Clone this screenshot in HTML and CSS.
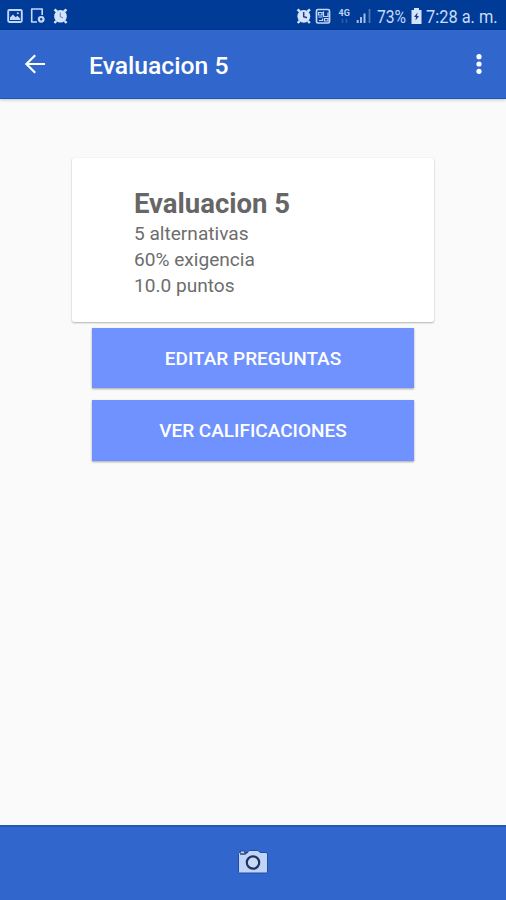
FILE: index.html
```html
<!DOCTYPE html>
<html lang="es">
<head>
<meta charset="utf-8">
<meta name="viewport" content="width=device-width, initial-scale=1">
<title>Evaluacion 5</title>
<link rel="stylesheet" href="styles.css">
</head>
<body>
<div class="screen">
  <header class="status">
    <svg class="status-left" width="70" height="30" viewBox="0 0 70 30" fill="none">
      <rect x="8.2" y="10" width="13.6" height="12" rx="1.2" stroke="#c3d8f8" stroke-width="1.900"/>
      <path d="M10 20v-2.500l3-3 2.600 2.700 1.800-1.500 2.800 2.800v1.500z" fill="#c3d8f8"/>
      <circle cx="17.800" cy="13.200" r="1" fill="#c3d8f8"/>
      <path d="M37 22h-5.300V9h10.500v6" stroke="#c3d8f8" stroke-width="1.600" stroke-linejoin="round"/>
      <circle cx="41.200" cy="19.300" r="2.300" stroke="#c3d8f8" stroke-width="2.200"/>
      <circle cx="60.500" cy="16.300" r="6.300" fill="#d5e4fb"/>
      <path d="M54.500 9.500l2.500 2M66.500 9.500l-2.500 2M56.300 21l-1.800 2M64.700 21l1.800 2" stroke="#d5e4fb" stroke-width="2.500"/>
      <path d="M60.300 12.500v4.200l2.700 1.300" stroke="#6e92ce" stroke-width="1.200"/>
    </svg>
    <div class="status-right">
      <svg width="78" height="30" viewBox="296 0 78 30" fill="none">
        <circle cx="303.800" cy="16.300" r="6.400" fill="#d5e4fb"/>
        <path d="M297.500 9.500l2.500 2M310 9.500l-2.500 2M299.600 21l-1.800 2M308 21l1.800 2" stroke="#d5e4fb" stroke-width="2.500"/>
        <path d="M303.700 12v4.700l3.300 1" stroke="#124096" stroke-width="1.500"/>
        <rect x="316.500" y="9.500" width="13" height="13.500" rx="1.500" stroke="#c3d8f8" stroke-width="1.700"/>
        <path d="M318.500 12.500h3.500v2.500h-3.500zM323.500 11.500v5h4.500v-4M318.500 17h4M319 20.500h3.500v-2M324.500 18.500h3.500v2.500h-3.500z" stroke="#c3d8f8" stroke-width="1.200"/>
        <text x="338.500" y="16" class="network">4G</text>
        <path d="M342.500 19v4M346.500 19v4" stroke="#3059a2" stroke-width="1.500"/>
        <path d="M357.700 20v3M361 17v6M364.500 13.500v9.500" stroke="#a3bde8" stroke-width="2"/>
        <path d="M369.500 9v14" stroke="#4f78bb" stroke-width="1.800"/>
      </svg>
      <span class="battery-level">73%</span>
      <svg class="battery" width="11" height="16" viewBox="0 0 11 16">
        <path d="M3 0h5v2h2.500v14H.500V2H3z" fill="#d5e4fb"/>
        <path d="M6.500 4.500L3 9h2l-.500 3.500L8 8H6z" fill="#0b3c98"/>
      </svg>
      <span class="clock">7:28 a. m.</span>
    </div>
  </header>
  <nav class="appbar">
    <svg class="back" width="22" height="22" viewBox="0 0 22 22" fill="none" stroke="#fff" stroke-width="2.200">
      <path d="M21 11H3M11.200 2.200L2.400 11l8.800 8.800"/>
    </svg>
    <h1 class="title">Evaluacion 5</h1>
    <svg class="more" width="8" height="22" viewBox="0 0 8 22" fill="#fff">
      <circle cx="4" cy="3.700" r="2.600"/><circle cx="4" cy="11" r="2.600"/><circle cx="4" cy="18.300" r="2.600"/>
    </svg>
  </nav>
  <main class="content">
    <section class="card">
      <h2 class="card-title">Evaluacion 5</h2>
      <p class="line">5 alternativas</p>
      <p class="line">60% exigencia</p>
      <p class="line">10.0 puntos</p>
    </section>
    <button class="action edit">EDITAR PREGUNTAS</button>
    <button class="action grades">VER CALIFICACIONES</button>
  </main>
  <footer class="bottom">
    <svg width="32" height="26" viewBox="0 0 32 26" fill="none">
      <path d="M2 3.500h1.500V2h4v1.500h3L12 1.500h9l2 2h6q1.500 0 1.500 1.500v18q0 1-1 1H2.500q-1 0-1-1V4.500z" fill="#c0d3f8" stroke="#244d9f" stroke-width="1"/>
      <path d="M3 5h5l3-2" stroke="#34466f" stroke-width="1.300"/>
      <circle cx="16" cy="13.500" r="6.200" fill="#c9daf9" stroke="#1e335f" stroke-width="2.200"/>
    </svg>
  </footer>
</div>
</body>
</html>
```
FILE: styles.css
```css
* { box-sizing: border-box; margin: 0; padding: 0; }
body { font-family: Roboto, "Liberation Sans", sans-serif; background: #fafafa; }
.screen { height: 900px; display: flex; flex-direction: column; }
.status {
  height: 30px;
  flex: none;
  display: flex;
  justify-content: space-between;
  background: #003b98;
  color: #c8dbf9;
}
.status svg { display: block; flex: none; }
.status-right { display: flex; align-items: center; padding-right: 9px; }
.network { font: 700 9px Roboto, sans-serif; fill: #bfd3f5; }
.battery-level, .clock {
  font-size: 18px;
  line-height: 30px;
  white-space: nowrap;
  padding-top: 3px;
  transform-origin: left center;
}
.battery-level { width: 30px; margin-left: 3px; transform: scaleX(.87); }
.battery { margin: 2px 4px 0 4px; }
.clock { width: 71px; transform: scaleX(.91); }
.appbar {
  height: 69px;
  flex: none;
  display: flex;
  align-items: center;
  padding: 0 23px 0 24px;
  background: #3166cd;
  border-bottom: 1px solid #2057b5;
  box-shadow: 0 1px 3px rgba(0, 0, 0, .22);
}
.title { margin-left: 43px; color: #fff; font-size: 24.7px; font-weight: 500; line-height: 30px; padding-top: 3px; white-space: nowrap; }
.more { margin-left: auto; }
.content { flex: 1; display: flex; flex-direction: column; align-items: center; padding-top: 59px; }
.card {
  width: 362px;
  height: 164px;
  padding: 29px 62px 0;
  background: #fff;
  border-radius: 2px;
  color: #6d6d6d;
  box-shadow: 0 1px 2px rgba(0, 0, 0, .28), 0 0 1px rgba(0, 0, 0, .15);
}
.card-title { color: #666; font-size: 27.5px; font-weight: 700; line-height: 34px; white-space: nowrap; }
.line { font-size: 19.1px; line-height: 26px; white-space: nowrap; }
.action {
  width: 322px;
  height: 60px;
  border: 0;
  background: #7092ff;
  color: #fff;
  font: 500 19px Roboto, "Liberation Sans", sans-serif;
  box-shadow: 0 1px 2px rgba(0, 0, 0, .35);
}
.edit { margin-top: 6px; }
.grades { margin-top: 12px; height: 61px; }
.bottom {
  height: 75px;
  flex: none;
  display: flex;
  align-items: center;
  justify-content: center;
  padding-bottom: 4px;
  background: #3166cd;
  border-top: 2px solid #1d59b6;
}
```
